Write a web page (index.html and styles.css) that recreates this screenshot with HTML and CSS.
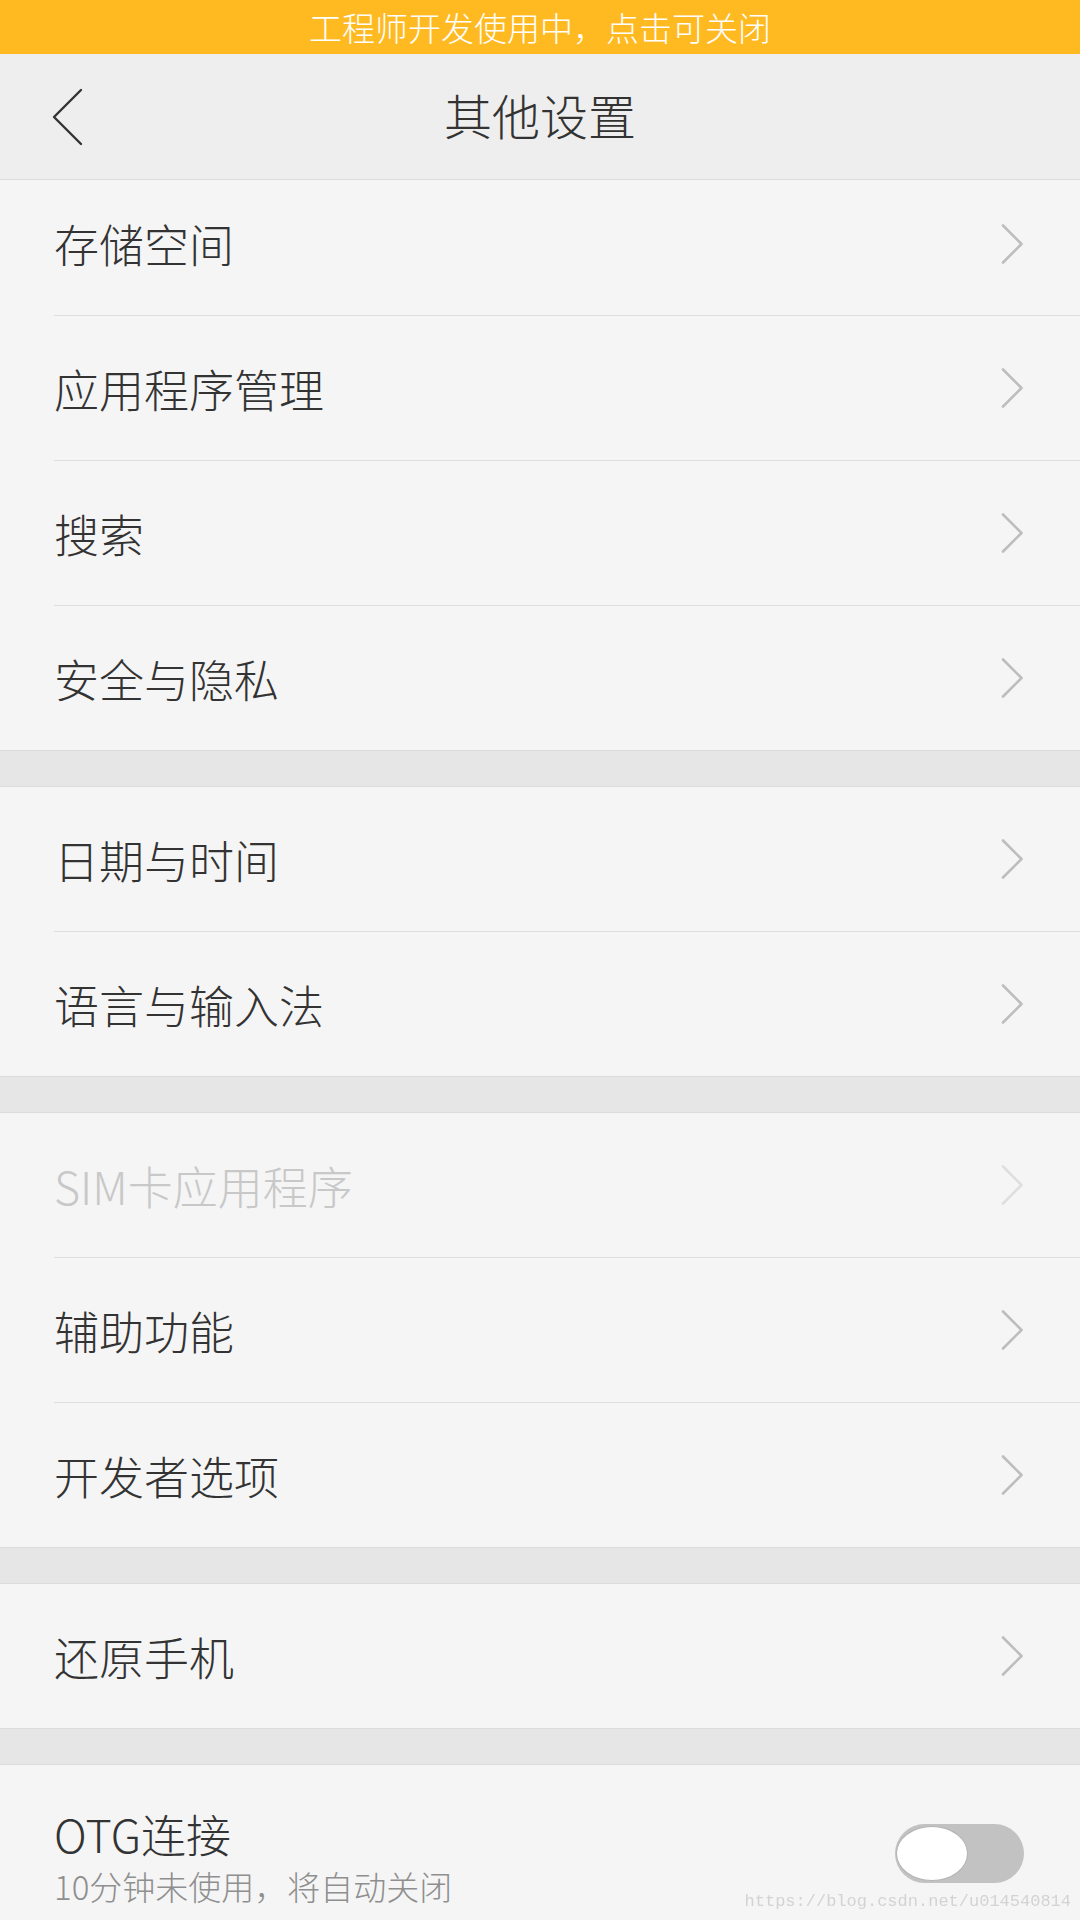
FILE: index.html
```html
<!DOCTYPE html>
<html>

<head>
    <meta charset="utf-8">
    <title>其他设置</title>
    <link rel="stylesheet" href="styles.css">
</head>

<body>
    <div class="dev-bar">工程师开发使用中，点击可关闭</div>

    <div class="header">
        <a class="back" href="#">
            <svg width="32" height="58" viewBox="0 0 32 58">
                <polyline points="29,2 2,29 29,56" fill="none" stroke="#333" stroke-width="2.4" stroke-linecap="round" stroke-linejoin="round" />
            </svg>
        </a>
        <div class="title">其他设置</div>
        <div></div>
    </div>

    <div class="list">
        <div class="group first">
            <a class="row short" href="#"><span>存储空间</span><i class="chevron"></i></a>
            <a class="row" href="#"><span>应用程序管理</span><i class="chevron"></i></a>
            <a class="row" href="#"><span>搜索</span><i class="chevron"></i></a>
            <a class="row" href="#"><span>安全与隐私</span><i class="chevron"></i></a>
        </div>
        <div class="group">
            <a class="row" href="#"><span>日期与时间</span><i class="chevron"></i></a>
            <a class="row" href="#"><span>语言与输入法</span><i class="chevron"></i></a>
        </div>
        <div class="group">
            <a class="row disabled" href="#"><span>SIM卡应用程序</span><i class="chevron"></i></a>
            <a class="row" href="#"><span>辅助功能</span><i class="chevron"></i></a>
            <a class="row" href="#"><span>开发者选项</span><i class="chevron"></i></a>
        </div>
        <div class="group">
            <a class="row" href="#"><span>还原手机</span><i class="chevron"></i></a>
        </div>
        <div class="group last">
            <div class="row switch-row">
                <div class="labels">
                    <div class="label">OTG连接</div>
                    <div class="hint">10分钟未使用，将自动关闭</div>
                </div>
                <div class="toggle"><div class="knob"></div></div>
            </div>
        </div>
    </div>

    <div class="watermark">https://blog.csdn.net/u014540814</div>
</body>

</html>
```

FILE: styles.css
```css
html {
    background-color: #f5f5f5;
}
body {
    margin: 0;
    font-family: "Noto Sans CJK SC", "Noto Sans", sans-serif;
    font-weight: 300;
    color: #333;
}
a {
    color: inherit;
    text-decoration: none;
}

.dev-bar {
    height: 54px;
    line-height: 54px;
    background-color: #ffba22;
    color: #fff;
    font-size: 33px;
    text-align: center;
}

.header {
    height: 125px;
    background-color: #eeeeee;
    border-bottom: 1px solid #dcdcdc;
    display: grid;
    grid-template-columns: 1fr auto 1fr;
    align-items: center;
}
.header .back {
    display: flex;
    padding-left: 52px;
}
.header .title {
    font-size: 48px;
    color: #333;
    margin-bottom: 6px;
}

.list {
    display: flex;
    flex-direction: column;
    gap: 35px;
    background-color: #e6e6e6;
}
.group {
    background-color: #f5f5f5;
    border-top: 1px solid #dcdcdc;
    border-bottom: 1px solid #dcdcdc;
}
.group.first {
    border-top: none;
}
.group.last {
    border-bottom: none;
    min-height: 160px;
}

.row {
    margin-left: 54px;
    padding-right: 57px;
    height: 144px;
    display: flex;
    align-items: center;
    justify-content: space-between;
    font-size: 45px;
}
.row.short {
    height: 127px;
    padding-bottom: 8px;
}
.row + .row {
    border-top: 1px solid #dedede;
}
.row.disabled {
    color: #c8c8c8;
}

.chevron {
    width: 22px;
    height: 40px;
    background: no-repeat center / 22px 40px;
    background-image: url("data:image/svg+xml;utf8,<svg xmlns='http://www.w3.org/2000/svg' width='22' height='40' viewBox='0 0 22 40'><polyline points='2,1.5 20.5,20 2,38.5' fill='none' stroke='%23bdbdbd' stroke-width='2.6' stroke-linecap='round' stroke-linejoin='round'/></svg>");
}
.row.disabled .chevron {
    background-image: url("data:image/svg+xml;utf8,<svg xmlns='http://www.w3.org/2000/svg' width='22' height='40' viewBox='0 0 22 40'><polyline points='2,1.5 20.5,20 2,38.5' fill='none' stroke='%23dedede' stroke-width='2.6' stroke-linecap='round' stroke-linejoin='round'/></svg>");
}

.switch-row {
    height: auto;
    padding-top: 42px;
    align-items: flex-start;
    padding-right: 56px;
}
.switch-row .label {
    font-size: 45px;
    line-height: 54px;
}
.switch-row .hint {
    margin-top: 5px;
    font-size: 33px;
    line-height: 40px;
    color: #8f8f8f;
}

.toggle {
    margin-top: 17px;
    width: 129px;
    height: 59px;
    border-radius: 30px;
    background-color: #c2c2c2;
    display: flex;
    align-items: center;
    padding: 0 1px;
    box-sizing: border-box;
}
.toggle .knob {
    width: 72px;
    height: 55px;
    border-radius: 50%;
    background-color: #fff;
    border: 1.5px solid #b3b3b3;
    box-sizing: border-box;
}

.watermark {
    position: fixed;
    right: 9px;
    bottom: 10px;
    font-family: "Liberation Mono", monospace;
    font-size: 17px;
    line-height: 17px;
    color: #d3d3d3;
}
```
